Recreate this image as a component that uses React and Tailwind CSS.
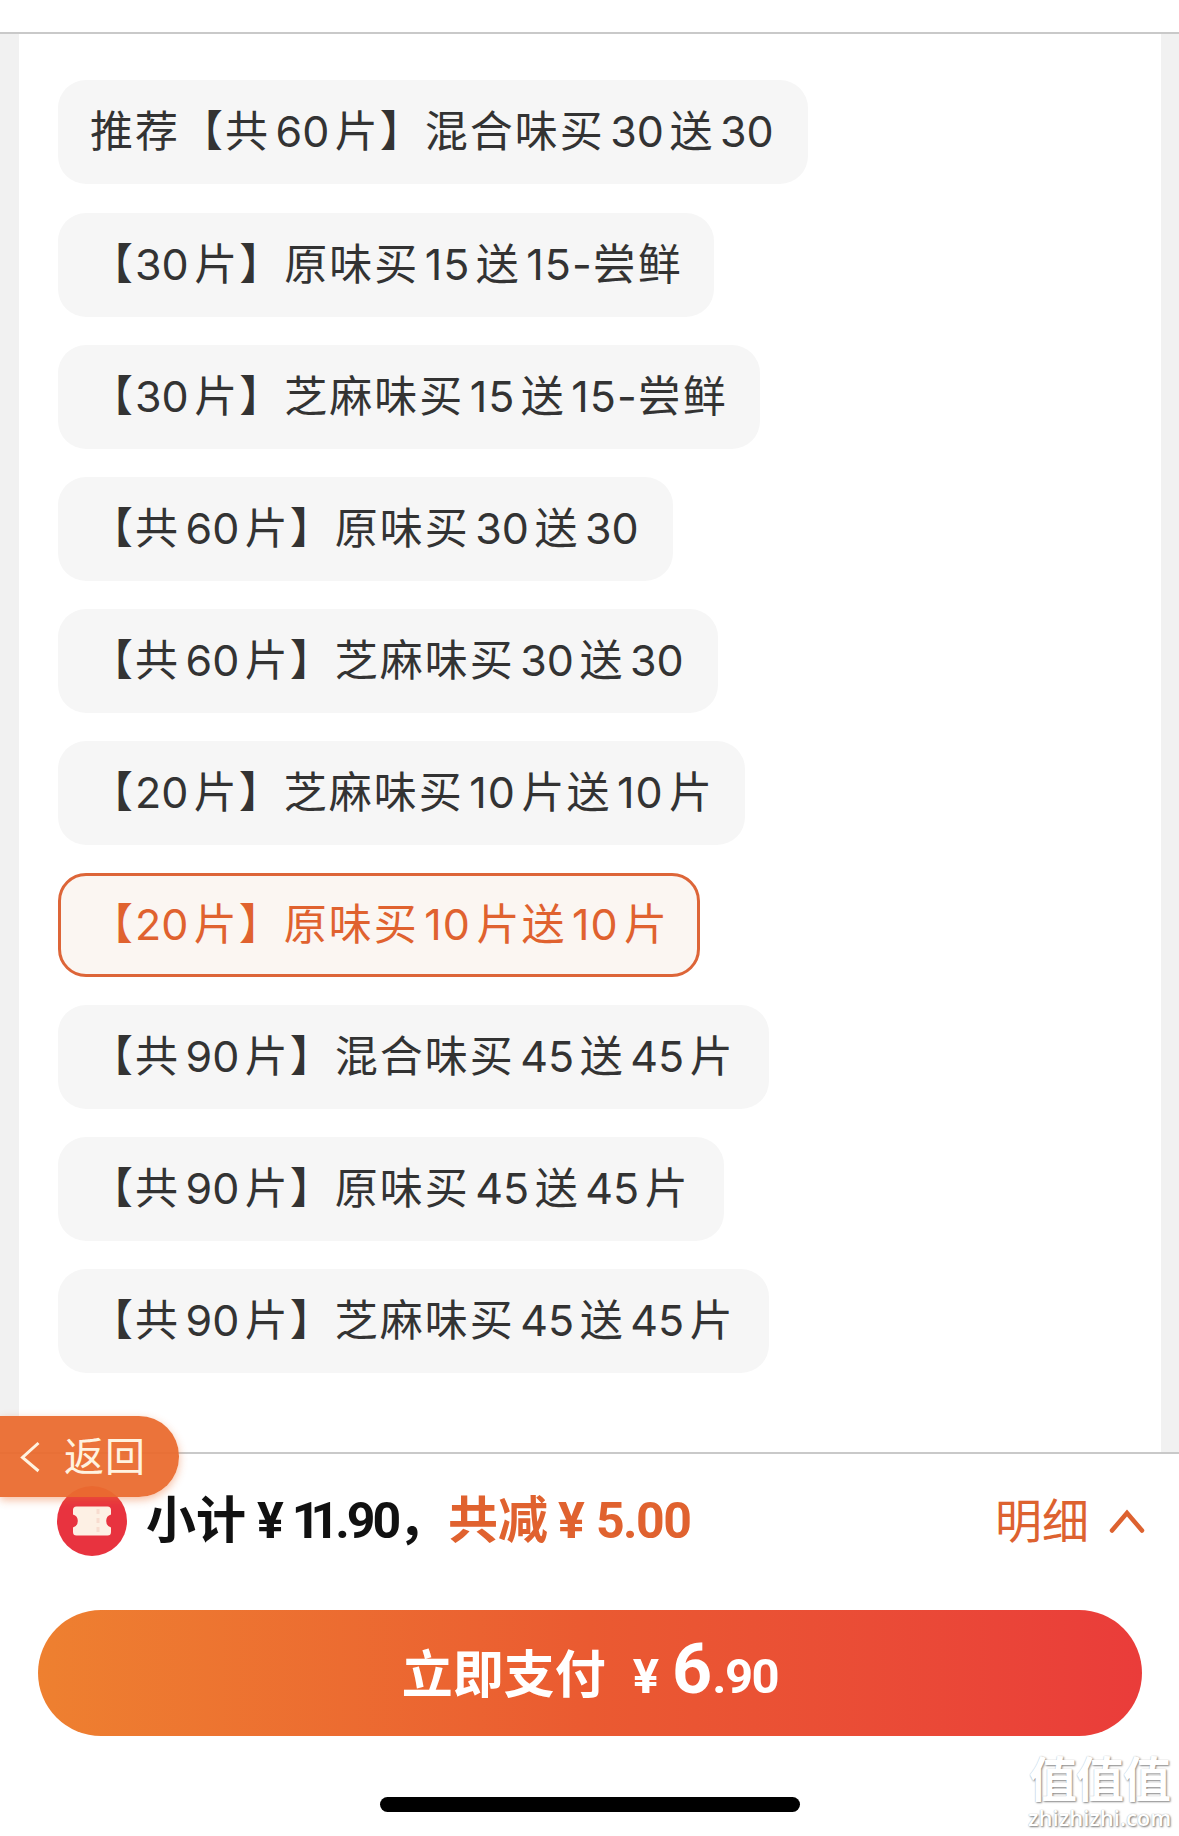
import React, { useState } from "react";

const OPTIONS = [
  { id: 1, label: "推荐【共60片】混合味买30送30", width: "w-[750px]" },
  { id: 2, label: "【30片】原味买15送15-尝鲜", width: "w-[656px]" },
  { id: 3, label: "【30片】芝麻味买15送15-尝鲜", width: "w-[702px]" },
  { id: 4, label: "【共60片】原味买30送30", width: "w-[615px]" },
  { id: 5, label: "【共60片】芝麻味买30送30", width: "w-[660px]" },
  { id: 6, label: "【20片】芝麻味买10片送10片", width: "w-[687px]" },
  { id: 7, label: "【20片】原味买10片送10片", width: "w-[642px]" },
  { id: 8, label: "【共90片】混合味买45送45片", width: "w-[711px]" },
  { id: 9, label: "【共90片】原味买45送45片", width: "w-[666px]" },
  { id: 10, label: "【共90片】芝麻味买45送45片", width: "w-[711px]" },
];

// Numbers get a little air on the sides that touch a Chinese character
const Label = ({ text }) => {
  const parts = text.split(/([0-9-]+)/).filter(Boolean);
  return parts.map((part, i) => {
    if (!/^[0-9]/.test(part)) {
      return <span key={i}>{part}</span>;
    }
    const afterBracket = i > 0 && parts[i - 1].endsWith("【");
    const beforeDash = part.endsWith("-");
    return (
      <span
        key={i}
        className={`font-['Inter'] text-[43px] ${
          part.startsWith("1") ? "tracking-[1px]" : "tracking-[0px]"
        } ${afterBracket ? "" : "ml-[5.5px]"} ${beforeDash ? "" : "mr-[5.5px]"}`}
      >
        {part}
      </span>
    );
  });
};

const Option = ({ option, active, onSelect }) => (
  <button
    type="button"
    onClick={() => onSelect(option.id)}
    className={`h-[104px] pb-[5px] rounded-[28px] text-left whitespace-nowrap text-[43px] leading-none tracking-[2px] first:mb-px ${
      option.width
    } ${
      active
        ? "border-[3px] border-[#dd6538] bg-[#fbf6f2] text-[#e0622f] pl-[29px]"
        : "bg-[#f6f6f6] text-[#333333] pl-[32px]"
    }`}
  >
    <Label text={option.label} />
  </button>
);

const CouponIcon = () => (
  <svg viewBox="0 0 70 70" className="w-[70px] h-[70px] shrink-0">
    <circle cx="35" cy="35" r="35" fill="#e8333f" />
    <path
      d="M19.500 20.500h31a3.500 3.500 0 0 1 3.500 3.500v4.500a6.800 6.800 0 0 0 0 13V46a3.500 3.500 0 0 1-3.500 3.500h-31A3.500 3.500 0 0 1 16 46v-4.500a6.800 6.800 0 0 0 0-13V24a3.500 3.500 0 0 1 3.500-3.500z"
      fill="#fdf0e4"
    />
    <path d="M41 23v25" stroke="#f8dccf" strokeWidth="3" strokeDasharray="5 4" />
  </svg>
);

const Footer = () => (
  <div className="h-[384px] bg-white border-t-2 border-[#c9c9c9] flex flex-col">
    <div className="mt-[32px] h-[70px] pl-[57px] pr-[34px] flex items-center whitespace-nowrap leading-none">
      <CouponIcon />
      <div className="ml-[19px] pb-[5px] flex items-baseline text-[50px] font-bold text-[#111111]">
        <span>小计</span>
        <span className="ml-[11px] font-['Roboto'] font-bold text-[50px] tracking-[-1px]">¥</span>
        <span className="ml-[9px] font-['Roboto'] font-bold text-[50px] tracking-[-10px]">11</span>
        <span className="ml-[6px] font-['Roboto'] font-bold text-[50px] tracking-[-3px]">.90</span>
        <span>，</span>
      </div>
      <div className="pb-[5px] flex items-baseline text-[50px] font-bold text-[#e0622f]">
        <span>共减</span>
        <span className="ml-[10px] font-['Roboto'] font-bold text-[50px] tracking-[-1px]">¥</span>
        <span className="ml-[12px] font-['Roboto'] font-bold text-[50px] tracking-[-1.5px]">5.00</span>
      </div>
      <button type="button" className="ml-auto flex items-center gap-[20px] text-[47px] text-[#dd6230]">
        <span className="pb-[7px]">明细</span>
        <svg viewBox="0 0 36 24" className="w-[36px] h-[24px]" fill="none">
          <path d="M3 21.500 18 4l15 17.500" stroke="currentColor" strokeWidth="4.500" strokeLinecap="round" />
        </svg>
      </button>
    </div>

    <button
      type="button"
      className="mt-[54px] ml-[38px] w-[1104px] h-[126px] shrink-0 rounded-full flex items-center justify-center bg-linear-to-r from-[#ee8030] via-[#ea5a31] to-[#ea3c3a] text-white whitespace-nowrap leading-none"
    >
      <span className="pb-[8px] flex items-baseline text-[51px] font-bold">
        <span>立即支付</span>
        <span className="ml-[27px] font-['Roboto'] font-bold text-[49px]">¥</span>
        <span className="ml-[13px] font-['Roboto'] font-bold text-[70px]">6</span>
        <span className="font-['Roboto'] font-bold text-[49px] tracking-[-1.5px]">.90</span>
      </span>
    </button>

    <div className="mt-[61px] ml-[380px] w-[420px] h-[15px] shrink-0 rounded-full bg-black" />
  </div>
);

const BackButton = () => (
  <button
    type="button"
    className="absolute left-0 top-[1416px] w-[179px] h-[81px] rounded-r-[40px] bg-[#ea6c2f]/95 shadow-[0_3px_8px_rgba(234,108,47,0.45)] flex items-center pl-[19px] text-[40px] leading-none text-[#fff3e0] whitespace-nowrap"
  >
    <svg viewBox="0 0 22 32" className="w-[22px] h-[32px]" fill="none">
      <path d="M19.500 2 3.500 16.500 19.500 30" stroke="currentColor" strokeWidth="3" />
    </svg>
    <span className="ml-[23px] pb-[5px] tracking-[1px]">返回</span>
  </button>
);

const Watermark = () => (
  <div className="absolute right-[8px] top-[1748px] w-[143px] text-white text-center whitespace-nowrap pointer-events-none">
    <div className="text-[48px] leading-[56px] font-bold tracking-[-1px] [text-shadow:1px_1px_2px_#888888,0_0_1px_#bbbbbb]">
      值值值
    </div>
    <div className="font-['Open_Sans'] text-[22px] leading-[26px] font-semibold [text-shadow:1px_1px_2px_#777777,0_0_1px_#aaaaaa]">
      zhizhizhi.com
    </div>
  </div>
);

const App = () => {
  const [selected, setSelected] = useState(7);

  return (
    <div className="relative w-[1179px] h-[1836px] overflow-hidden bg-white font-['Noto_Sans_CJK_SC',sans-serif]">
      <div className="h-[34px] border-b-2 border-[#c9c9c9]" />
      <div className="h-[1418px] bg-[#f1f1f1] pl-[19px] pr-[18px]">
        <div className="h-full bg-white pt-[46px] pl-[39px] flex flex-col items-start gap-[28px]">
          {OPTIONS.map((option) => (
            <Option
              key={option.id}
              option={option}
              active={option.id === selected}
              onSelect={setSelected}
            />
          ))}
        </div>
      </div>
      <Footer />
      <BackButton />
      <Watermark />
    </div>
  );
};

export default App;
